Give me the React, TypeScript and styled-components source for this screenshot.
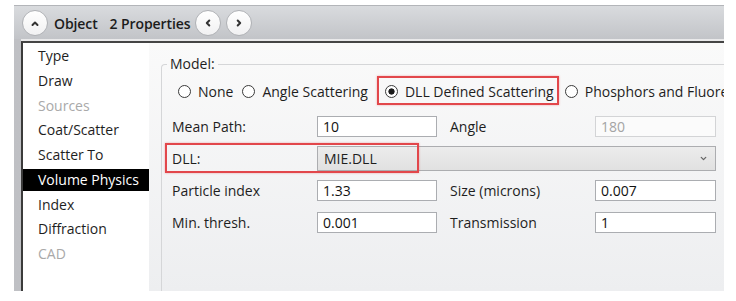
import * as React from "react"
import styled, { createGlobalStyle } from "styled-components"

const GlobalStyle = createGlobalStyle`
  html, body {
    margin: 0;
    padding: 0;
    background: #fff;
  }
  body {
    font-family: "Open Sans", "Noto Sans", sans-serif;
    font-size: 13.5px;
    color: #1e1e1e;
  }
`

const Page = styled.div`
  padding: 5px 0 0 14px;
  width: 710px;
`

const Frame = styled.div`
  display: flex;
  flex-direction: column;
  background: linear-gradient(90deg, #bfc0c4, #d2d3d7);
`

const Toolbar = styled.div`
  height: 33px;
  border-top: 1px solid #b3b5b9;
  background: linear-gradient(#d9dbde, #c2c4c8);
  display: flex;
  align-items: center;
  padding-left: 8px;
`

const RoundButton = styled.div<{ $gap?: number }>`
  width: 26px;
  height: 26px;
  box-sizing: border-box;
  border-radius: 50%;
  border: 1px solid #b0b2b6;
  background: linear-gradient(#ffffff, #f1f1f2);
  display: grid;
  place-items: center;
  margin-left: ${p => p.$gap ?? 0}px;
`

const Title = styled.span<{ $gap: number }>`
  font-size: 14px;
  font-weight: 600;
  color: #1c1c1c;
  margin-left: ${p => p.$gap}px;
  padding-top: 1px;
  letter-spacing: -0.1px;
`

const Panel = styled.div`
  margin-left: 7px;
  height: 248px;
  display: flex;
  background: #fff;
  border-top: 2px solid #454545;
  border-left: 2px solid #3b3b3b;
  box-shadow: 0 -2px 0 #e9e9ea;
  margin-top: 2px;
`

const NavList = styled.ul`
  list-style: none;
  margin: 0;
  padding: 2px 0 0;
  width: 126px;
  flex: none;
  display: flex;
  flex-direction: column;
  gap: 2.75px;
`

const NavItem = styled.li<{ $selected?: boolean; $disabled?: boolean }>`
  height: 22px;
  line-height: 22px;
  padding-left: 15px;
  font-size: 14px;
  white-space: nowrap;
  background: ${p => (p.$selected ? "#000" : "transparent")};
  color: ${p => (p.$selected ? "#fff" : p.$disabled ? "#a9a9a9" : "#1e1e1e")};
`

const Form = styled.div`
  flex: 1;
  overflow: hidden;
  padding: 12px 0 0 12px;
  background: linear-gradient(#fafafa, #edeef0);
`

const Group = styled.fieldset`
  margin: 0;
  padding: 0;
  min-width: 0;
  width: 640px;
  height: 260px;
  border: 1px solid #d5d6d8;
  border-right: none;
  border-bottom: none;
  border-top-left-radius: 4px;
`

const Legend = styled.legend`
  margin-left: 5px;
  padding: 0 3px;
  line-height: 18px;
  font-size: 14px;
`

const GroupBody = styled.div`
  padding-left: 10px;
`

const RadioRow = styled.div`
  margin: 3px 0 0 6px;
  height: 29px;
  display: flex;
  align-items: center;
  gap: 9px;
  white-space: nowrap;
`

const RadioOption = styled.label<{ $marked?: boolean }>`
  display: inline-flex;
  align-items: center;
  gap: 7px;
  height: 29px;
  box-sizing: border-box;
  font-size: 14px;
  padding: ${p => (p.$marked ? "1px 3px 0 6px" : "1px 0 0")};
  margin-right: ${p => (p.$marked ? -3 : 0)}px;
  border: ${p => (p.$marked ? "2px solid #e2474b" : "none")};
  box-shadow: ${p => (p.$marked ? "0 0 2px rgba(226, 71, 75, 0.45)" : "none")};
`

const RadioDot = styled.span<{ $checked?: boolean }>`
  width: 13px;
  height: 13px;
  box-sizing: border-box;
  border-radius: 50%;
  border: 1px solid #3a3a3a;
  background: ${p =>
    p.$checked ? "radial-gradient(circle, #1b1b1b 0 2.8px, #fff 3.4px)" : "#fff"};
`

const Fields = styled.div`
  margin-top: 5px;
  display: flex;
  flex-direction: column;
`

const FieldRow = styled.div`
  position: relative;
  height: 32px;
  display: grid;
  grid-template-columns: 145px 120px 158px 121px;
  align-items: center;
`

const Label = styled.span<{ $indent?: boolean }>`
  font-size: 14px;
  padding-left: ${p => (p.$indent ? 13 : 0)}px;
  white-space: nowrap;
`

const TextBox = styled.input`
  height: 21px;
  width: 100%;
  box-sizing: border-box;
  border: 1px solid #abadb1;
  padding: 0 5px;
  margin: 0;
  font: inherit;
  font-size: 14px;
  color: #111;
  background: #fff;
  outline: none;

  &:disabled {
    color: #a4a4a4;
    border-color: #d3d4d6;
    background: #fbfbfb;
  }
`

const ComboBox = styled.div`
  grid-column: 2 / span 3;
  height: 25px;
  box-sizing: border-box;
  border: 1px solid #acadb0;
  background: linear-gradient(#ececec, #e1e1e1);
  display: flex;
  align-items: center;
  justify-content: space-between;
  padding: 0 7px 0 6px;
  font-size: 14px;
`

const Marker = styled.div`
  position: absolute;
  left: -7px;
  top: 1px;
  width: 254px;
  height: 30px;
  box-sizing: border-box;
  border: 2px solid #e2474b;
  box-shadow: 0 0 2px rgba(226, 71, 75, 0.45);
  pointer-events: none;
`

function Chevron({ dir, size = 10, color = "#333", width = 2 }: {
  dir: "up" | "down" | "left" | "right"
  size?: number
  color?: string
  width?: number
}) {
  const d = {
    up: "M2.5 7 L5 4.5 L7.5 7",
    down: "M2.5 3.8 L5 6.3 L7.5 3.8",
    left: "M6.3 2.5 L3.8 5 L6.3 7.5",
    right: "M3.7 2.5 L6.2 5 L3.7 7.5",
  }[dir]
  return (
    <svg width={size} height={size} viewBox="0 0 10 10">
      <path d={d} fill="none" stroke={color} strokeWidth={width} strokeLinecap="round" strokeLinejoin="round" />
    </svg>
  )
}

const navItems: Array<{ name: string; disabled?: boolean }> = [
  { name: "Type" },
  { name: "Draw" },
  { name: "Sources", disabled: true },
  { name: "Coat/Scatter" },
  { name: "Scatter To" },
  { name: "Volume Physics" },
  { name: "Index" },
  { name: "Diffraction" },
  { name: "CAD", disabled: true },
]

const models = ["None", "Angle Scattering", "DLL Defined Scattering", "Phosphors and Fluorescence"]

export default function App() {
  const selected = "Volume Physics"
  const model = "DLL Defined Scattering"

  return <Page>
    <GlobalStyle />
    <Frame>
      <Toolbar>
        <RoundButton><Chevron dir="up" /></RoundButton>
        <Title $gap={6}>Object</Title>
        <Title $gap={12}>2 Properties</Title>
        <RoundButton $gap={5}><Chevron dir="left" /></RoundButton>
        <RoundButton $gap={5}><Chevron dir="right" /></RoundButton>
      </Toolbar>
      <Panel>
        <NavList>
          { navItems.map(item =>
            <NavItem key={item.name} $selected={item.name === selected} $disabled={item.disabled}>
              {item.name}
            </NavItem>
          )}
        </NavList>
        <Form>
          <Group>
            <Legend>Model:</Legend>
            <GroupBody>
              <RadioRow>
                { models.map(m =>
                  <RadioOption key={m} $marked={m === model}>
                    <RadioDot $checked={m === model} />
                    {m}
                  </RadioOption>
                )}
              </RadioRow>
              <Fields>
                <FieldRow>
                  <Label>Mean Path:</Label>
                  <TextBox readOnly defaultValue="10" />
                  <Label $indent>Angle</Label>
                  <TextBox disabled defaultValue="180" />
                </FieldRow>
                <FieldRow>
                  <Label>DLL:</Label>
                  <ComboBox>
                    <span>MIE.DLL</span>
                    <Chevron dir="down" size={9} color="#666" width={1.4} />
                  </ComboBox>
                  <Marker />
                </FieldRow>
                <FieldRow>
                  <Label>Particle index</Label>
                  <TextBox readOnly defaultValue="1.33" />
                  <Label $indent>Size (microns)</Label>
                  <TextBox readOnly defaultValue="0.007" />
                </FieldRow>
                <FieldRow>
                  <Label>Min. thresh.</Label>
                  <TextBox readOnly defaultValue="0.001" />
                  <Label $indent>Transmission</Label>
                  <TextBox readOnly defaultValue="1" />
                </FieldRow>
              </Fields>
            </GroupBody>
          </Group>
        </Form>
      </Panel>
    </Frame>
  </Page>
}
